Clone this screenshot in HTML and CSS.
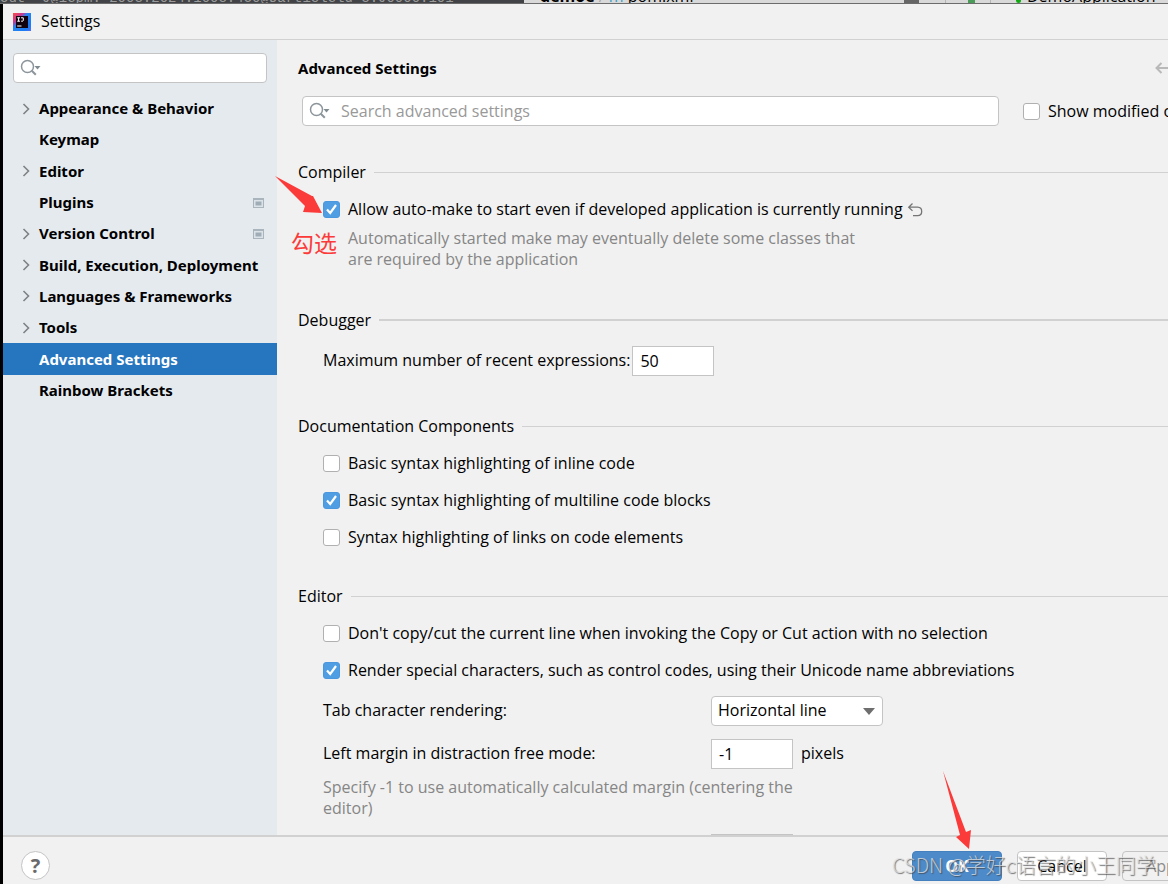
FILE: index.html
```html
<!DOCTYPE html>
<html lang="en">
<head>
<meta charset="utf-8">
<title>Settings</title>
<link rel="stylesheet" href="styles.css">
</head>
<body>
<svg class="defs" aria-hidden="true">
  <symbol id="chevron" viewBox="0 0 8 12"><path d="M1.500 1 6.500 6l-5 5" fill="none" stroke="#7f8285" stroke-width="1.600"/></symbol>
  <symbol id="search" viewBox="0 0 22 18"><circle cx="7.500" cy="7.500" r="6" fill="none" stroke="#8c959c" stroke-width="1.500"/><path d="m11.800 11.800 4 4" stroke="#8c959c" stroke-width="2"/><path d="M14.500 7h6l-3 3.500z" fill="#7f8b91"/></symbol>
  <symbol id="project" viewBox="0 0 11 10"><path d="M0 0h11v10H0z" fill="#a9b4bc"/><path d="M1 2h9v7H1z" fill="#dce3e8"/><path d="M2.500 3.500h6v4h-6z" fill="#a0adb6"/></symbol>
</svg>
<div class="desktop">
  <div class="ide-strip">
    <div class="ide-tabs">out -J@iepm. 2003.2024.1003.450@Uarticleld 3.J0000.101</div>
    <div class="ide-path"><b>demoe</b> <span class="sep">/</span> <span class="module">m</span> pom.xml</div>
    <div class="ide-run"><i class="hammer"></i><i class="line"></i><i class="green"></i><i class="line"></i><i class="dot"></i>DemoApplication</div>
  </div>
  <div class="dialog">
    <header class="titlebar">
      <svg class="logo" viewBox="0 0 18 18">
        <defs><linearGradient id="lg" x1="0" y1="0" x2="1" y2="1"><stop offset="0" stop-color="#fc4d45"/><stop offset=".28" stop-color="#c7378f"/><stop offset=".42" stop-color="#2784f0"/><stop offset=".8" stop-color="#1a7cf5"/><stop offset="1" stop-color="#5a6df0"/></linearGradient></defs>
        <path d="M0 0h18v18H0z" fill="url(#lg)"/><path d="M3 3h12v12H3z" fill="#10030f"/>
        <path d="M4.200 4.800h2.800M5.600 4.800v3.400M4.200 8.200h2.800M8 4.800h2.300v2.400q0 1.100-1.100 1.100-.8 0-1.200-.5M4.200 13h4.300" fill="none" stroke="#fff" stroke-width="1"/>
      </svg>
      <span>Settings</span>
    </header>
    <div class="content">
      <aside class="sidebar">
        <div class="search-box side-search"><svg class="search-icon"><use href="#search"/></svg><input type="text" aria-label="Search settings"></div>
        <nav class="tree">
          <button class="node"><svg class="chevron"><use href="#chevron"/></svg><span>Appearance &amp; Behavior</span></button>
          <button class="node"><span>Keymap</span></button>
          <button class="node"><svg class="chevron"><use href="#chevron"/></svg><span>Editor</span></button>
          <button class="node"><span>Plugins</span><svg class="project"><use href="#project"/></svg></button>
          <button class="node"><svg class="chevron"><use href="#chevron"/></svg><span>Version Control</span><svg class="project"><use href="#project"/></svg></button>
          <button class="node"><svg class="chevron"><use href="#chevron"/></svg><span>Build, Execution, Deployment</span></button>
          <button class="node"><svg class="chevron"><use href="#chevron"/></svg><span>Languages &amp; Frameworks</span></button>
          <button class="node"><svg class="chevron"><use href="#chevron"/></svg><span>Tools</span></button>
          <button class="node selected"><span>Advanced Settings</span></button>
          <button class="node"><span>Rainbow Brackets</span></button>
        </nav>
      </aside>
      <main class="panel">
        <div class="panel-head">
          <h1>Advanced Settings</h1>
          <button class="back" aria-label="Back"><svg viewBox="0 0 16 12"><path d="M6.500 1 1.500 6l5 5M1.500 6H16" fill="none" stroke="#b9b9b9" stroke-width="2"/></svg></button>
        </div>
        <div class="filter">
          <div class="search-box"><svg class="search-icon"><use href="#search"/></svg><input type="text" placeholder="Search advanced settings" aria-label="Search advanced settings"></div>
          <label class="check modified"><input type="checkbox"><span>Show modified only</span></label>
        </div>

        <section>
          <h2>Compiler</h2>
          <div class="row"><label class="check"><input type="checkbox" checked><span>Allow auto-make to start even if developed application is currently running</span></label>
            <button class="revert" aria-label="Revert"><svg viewBox="0 0 16 16"><path d="M5.500 1.500 1.700 5.200l3.800 3.700M1.700 5.200h9q4 .2 4 4.200t-4 4.200H6" fill="none" stroke="#757575" stroke-width="1.300"/></svg></button></div>
          <p class="hint indented">Automatically started make may eventually delete some classes that<br>are required by the application</p>
        </section>

        <section class="debugger">
          <h2>Debugger</h2>
          <div class="row field"><label for="expr">Maximum number of recent expressions:</label><input class="number" id="expr" type="text" value="50"></div>
        </section>

        <section>
          <h2>Documentation Components</h2>
          <div class="row"><label class="check"><input type="checkbox"><span>Basic syntax highlighting of inline code</span></label></div>
          <div class="row"><label class="check"><input type="checkbox" checked><span>Basic syntax highlighting of multiline code blocks</span></label></div>
          <div class="row"><label class="check"><input type="checkbox"><span>Syntax highlighting of links on code elements</span></label></div>
        </section>

        <section>
          <h2>Editor</h2>
          <div class="row"><label class="check"><input type="checkbox"><span>Don't copy/cut the current line when invoking the Copy or Cut action with no selection</span></label></div>
          <div class="row"><label class="check"><input type="checkbox" checked><span>Render special characters, such as control codes, using their Unicode name abbreviations</span></label></div>
          <div class="row field aligned"><label for="tab">Tab character rendering:</label>
            <div class="combo"><select id="tab"><option>Horizontal line</option></select><svg viewBox="0 0 12 7"><path d="M0 0h12L6 7z" fill="#6e6e6e"/></svg></div></div>
          <div class="row field aligned"><label for="margin">Left margin in distraction free mode:</label><input class="number" id="margin" type="text" value="-1"><span>pixels</span></div>
          <p class="hint after-field">Specify -1 to use automatically calculated margin (centering the<br>editor)</p>
          <div class="row field aligned"><label></label><input class="number" type="text" aria-label="Next setting"></div>
        </section>
      </main>
    </div>
    <footer class="footer">
      <button class="help" aria-label="Help">?</button>
      <div class="actions"><button class="btn primary">OK</button><button class="btn">Cancel</button><button class="btn disabled" disabled>Apply</button></div>
    </footer>
  </div>
  <svg class="arrow arrow-check" viewBox="0 0 48 38"><path d="M0 0 37 20 38 20 47 37 28 36 30 30z" fill="#fb3b3a"/></svg>
  <span class="note">勾选</span>
  <svg class="arrow arrow-ok" viewBox="0 0 30 78"><path d="M1 0 24 61 29 59 27 78 14 66 18 64z" fill="#fb3b3a"/></svg>
  <span class="watermark">CSDN @学好c语言的小王同学</span>
</div>
</body>
</html>
```
FILE: styles.css
```css
* { box-sizing: border-box; }
body { margin: 0; font: 16px/21px "Open Sans", "Noto Sans CJK SC", sans-serif; color: #000; }
button, input, select { font: inherit; color: inherit; }
button { border: 0; background: none; padding: 0; }
input { margin: 0; outline: 0; }
.defs { display: none; }

.desktop { position: relative; height: 100vh; overflow: hidden; background: #000; display: flex; flex-direction: column; }

/* Edge of the IDE window behind the dialog */
.ide-strip { flex: none; height: 4px; border-bottom: 1px solid #6c6c6c; background: #d9d9d9; display: flex; overflow: hidden; align-items: flex-end; white-space: nowrap; }
.ide-strip > div { height: 14px; line-height: 14px; flex: none; }
.ide-strip > .ide-tabs { width: 524px; height: 10px; line-height: 10px; background: #414347; color: #9b9b9b; font-family: "Liberation Mono", monospace; font-size: 14px; }
.ide-strip > .ide-path { flex: 1; padding-left: 16px; }
.module { color: #3ba0c8; }
.sep { color: #a8a8a8; }
.ide-run { display: flex; align-items: flex-end; width: 264px; }
.hammer { width: 15px; height: 4px; background: #666; }
.line { width: 1px; height: 14px; background: #b5b5b5; margin-left: 26px; }
.green { width: 7px; height: 4px; background: #4b9c58; margin-left: 22px; }
.green + .line { margin-left: 15px; }
.dot { width: 5px; height: 5px; border-radius: 3px; background: #12a912; margin: 0 6px 0 25px; }

/* The dialog runs past the right edge of the window */
.dialog { flex: 1; min-height: 0; margin: 0 -60px 0 3px; background: #f1f1f1; display: flex; flex-direction: column; }
.titlebar { flex: none; height: 36px; border-bottom: 1px solid #d1d1d1; display: flex; align-items: center; gap: 10px; padding-left: 10px; }
.logo { width: 18px; height: 18px; }

.content { flex: 1; min-height: 0; display: flex; }
.sidebar { width: 274px; flex: none; background: #e5eaee; padding-top: 13px; }
.search-box { height: 30px; background: #fff; border: 1px solid #c4c4c4; border-radius: 4px; display: flex; align-items: center; padding-left: 6px; }
.search-box input { flex: 1; min-width: 0; border: 0; background: none; padding: 0 0 0 10px; }
.search-box input::placeholder { color: #999; opacity: 1; }
.search-icon { width: 22px; height: 18px; flex: none; }
.side-search { margin: 0 10px; }
.tree { margin-top: 10px; height: 313px; display: flex; flex-direction: column; }
.node { position: relative; flex: 1; padding: 0 13px 0 36px; display: flex; align-items: center; justify-content: space-between; font-family: "Noto Sans", sans-serif; font-weight: 700; font-size: 15px; text-align: left; white-space: nowrap; }
.node.selected { background: #2675bf; color: #fff; }
.chevron { position: absolute; left: 19px; width: 8px; height: 12px; }
.project { width: 11px; height: 10px; }

.panel { flex: 1; min-width: 0; overflow: hidden; padding-left: 21px; }
.panel-head { height: 56px; display: flex; align-items: center; justify-content: space-between; padding-right: 57px; }
.back { width: 16px; height: 12px; display: flex; }
.back svg { width: 16px; height: 12px; }
h1 { margin: 0; font: 700 15px/21px "Noto Sans", sans-serif; }
.filter { display: flex; align-items: center; padding-left: 4px; }
.filter .search-box { flex: 1; }
.filter .modified { width: 205px; margin-left: 24px; }

section { padding-bottom: 28px; }
.filter + section { padding-top: 34px; }
h2 { margin: 0 0 7px; height: 24px; font-size: 16px; font-weight: 400; display: flex; align-items: center; gap: 8px; }
h2::after { content: ""; flex: 1; height: 1px; background: #d1d1d1; }
.debugger h2::after { height: 2px; }
.row { height: 37px; display: flex; align-items: center; padding-left: 25px; white-space: nowrap; }
.row.field { height: 43px; gap: 8px; }
.debugger .row.field { gap: 2px; }
.debugger { padding-bottom: 32px; }
.aligned label { width: 380px; flex: none; }
.check { display: flex; align-items: center; gap: 8px; white-space: nowrap; }
.check input { appearance: none; width: 17px; height: 17px; flex: none; background: #fff; border: 1px solid #b0b0b0; border-radius: 3px; }
.check input:checked { border-color: #4b97dd; background: #4f9ee3 url("data:image/svg+xml,%3Csvg xmlns='http://www.w3.org/2000/svg' viewBox='0 0 15 15'%3E%3Cpath d='M3 7.500 6.200 11 12 3' fill='none' stroke='white' stroke-width='2.200'/%3E%3C/svg%3E"); }
.revert { width: 16px; height: 16px; margin-left: 4px; display: flex; }
.revert svg { width: 16px; height: 16px; }
.hint { margin: 0 0 10px; padding-left: 25px; color: #868686; }
.hint.indented { padding-left: 50px; }
.hint.after-field { margin: 2px 0 8px; }
.number { width: 82px; height: 30px; border: 1px solid #c4c4c4; background: #fff; padding: 0 7px; }
.combo { position: relative; width: 172px; height: 30px; }
.combo select { appearance: none; width: 100%; height: 100%; border: 1px solid #c4c4c4; border-radius: 4px; background: #fff; padding: 0 6px; }
.combo svg { position: absolute; right: 8px; top: 12px; width: 12px; height: 7px; pointer-events: none; }

.footer { flex: none; height: 49px; border-top: 2px solid #d1d1d1; display: flex; align-items: flex-start; justify-content: space-between; padding: 14px 16px 0 18px; }
.help { width: 29px; height: 29px; border: 1px solid #c4c4c4; border-radius: 50%; background: #fff; color: #6a6a6a; font-size: 20px; font-weight: 700; }
.actions { display: flex; gap: 15px; }
.btn { width: 90px; height: 30px; border: 1px solid #c4c4c4; border-radius: 4px; background: #fff; }
.btn.primary { background: #4c8aca; border-color: #4480be; color: #fff; font-weight: 700; }
.btn.disabled { background: #f1f1f1; color: #8c8c8c; }

/* Marks drawn over the dialog */
.arrow, .note, .watermark { position: absolute; pointer-events: none; }
.arrow-check { left: 275px; top: 176px; width: 48px; height: 38px; }
.arrow-ok { left: 942px; top: 771px; width: 30px; height: 78px; }
.note { left: 291px; top: 228px; font: 23px/28px "Noto Sans CJK SC", sans-serif; color: #fb3b3a; }
.watermark { left: 892px; top: 850px; font: 300 20px/30px "Noto Sans CJK SC", sans-serif; white-space: nowrap; color: rgba(225, 225, 225, .75); text-shadow: 1px 1px 1px rgba(70, 70, 70, .75); }
```
